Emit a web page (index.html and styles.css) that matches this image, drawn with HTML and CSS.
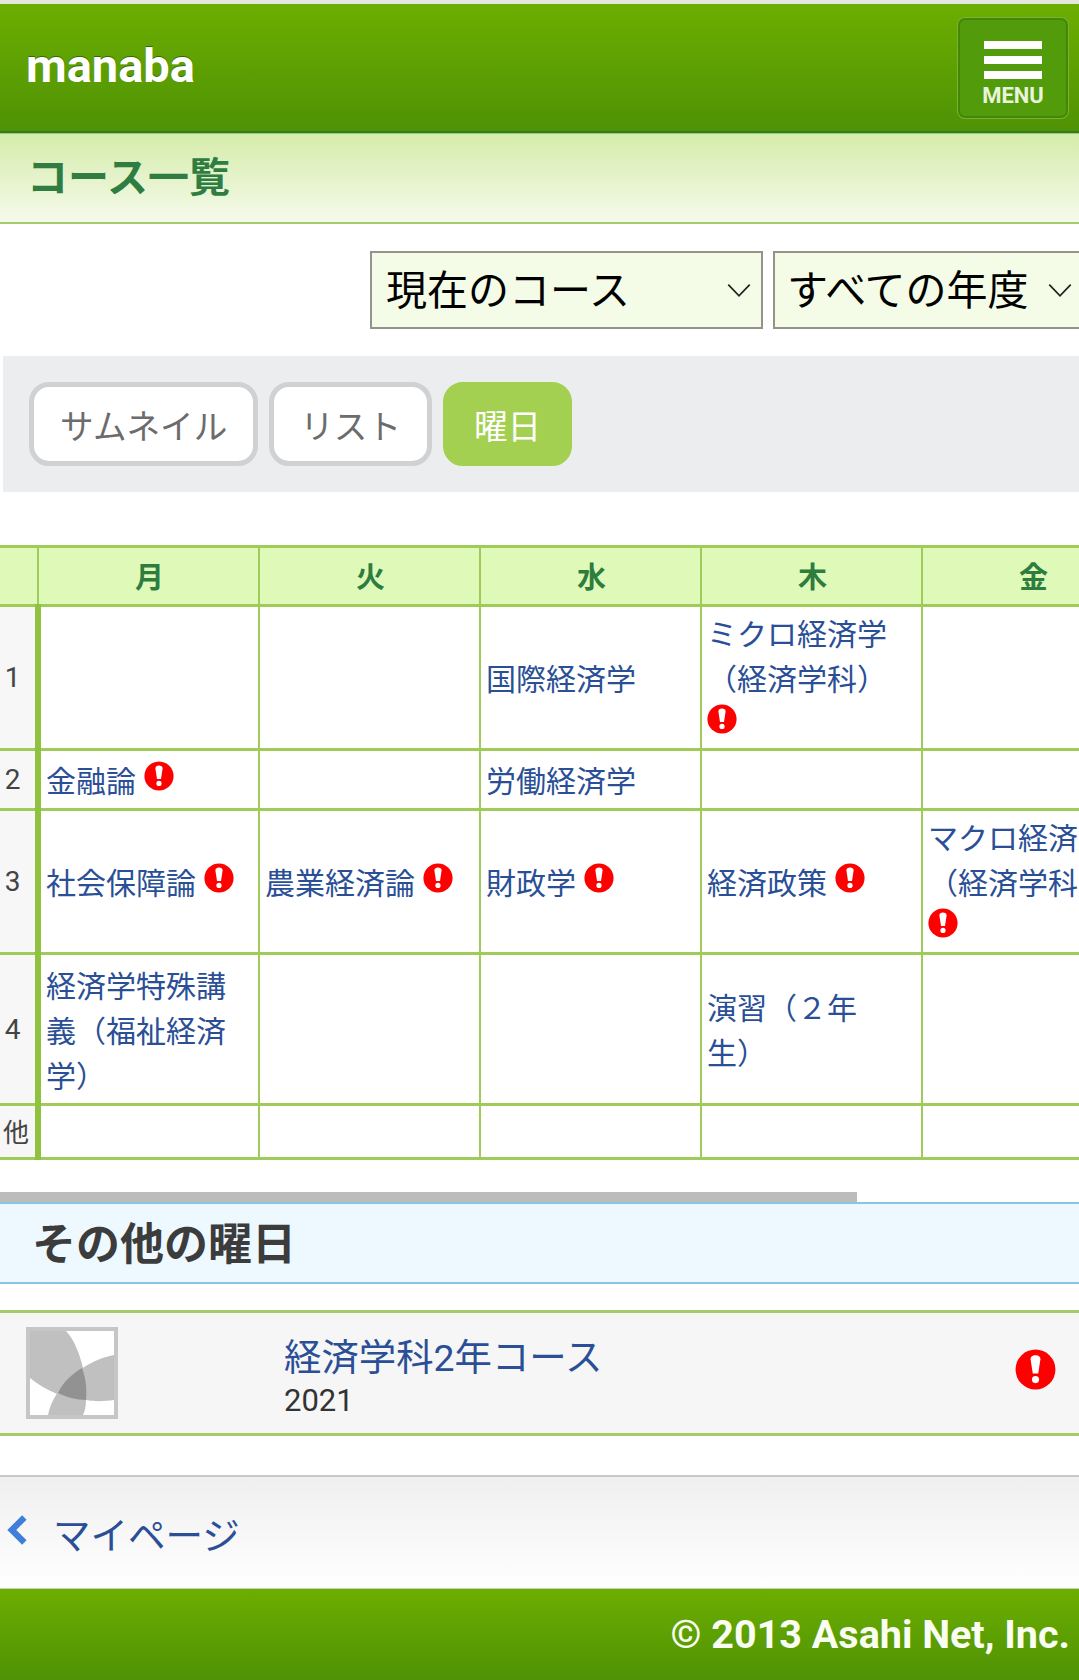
FILE: index.html
```html
<!DOCTYPE html>
<html lang="ja">
<head>
<meta charset="utf-8">
<title>manaba</title>
<link rel="stylesheet" href="styles.css">
</head>
<body>
<svg class="defs" width="0" height="0" aria-hidden="true">
  <symbol id="alert" viewBox="0 0 30 30">
    <circle cx="15" cy="15" r="14.6" fill="#f00"/>
    <path d="M11.4 7.5C11.4 5.4 13 4.6 15 4.6s3.6.8 3.6 2.9L17 18h-4z" fill="#fff"/>
    <circle cx="15" cy="22.4" r="2.6" fill="#fff"/>
  </symbol>
</svg>
<header class="topbar">
  <div class="brand">manaba</div>
  <div class="menu-btn">
    <span class="bar"></span><span class="bar"></span><span class="bar"></span>
    <span class="menu-label">MENU</span>
  </div>
</header>
<h1 class="page-title">コース一覧</h1>
<div class="filters">
  <div class="select select-a"><span>現在のコース</span><svg class="chev" viewBox="0 0 22 14"><path d="M1 1.5 11 12 21 1.5" fill="none" stroke="#222" stroke-width="1.6"/></svg></div>
  <div class="select select-b"><span>すべての年度</span><svg class="chev" viewBox="0 0 22 14"><path d="M1 1.5 11 12 21 1.5" fill="none" stroke="#222" stroke-width="1.6"/></svg></div>
</div>
<nav class="tabs">
  <a class="tab">サムネイル</a>
  <a class="tab">リスト</a>
  <a class="tab tab-on">曜日</a>
</nav>
<div class="table-wrap">
<table class="week">
  <thead>
    <tr class="r-head"><th class="corner"></th><th>月</th><th>火</th><th>水</th><th>木</th><th>金</th><th>土</th></tr>
  </thead>
  <tbody>
    <tr class="r1"><td class="num">1</td><td></td><td></td><td><a>国際経済学</a></td><td><a>ミクロ経済学（経済学科）</a> <svg class="alert"><use href="#alert"/></svg></td><td></td><td></td></tr>
    <tr class="r2"><td class="num">2</td><td><a>金融論</a> <svg class="alert"><use href="#alert"/></svg></td><td></td><td><a>労働経済学</a></td><td></td><td></td><td></td></tr>
    <tr class="r3"><td class="num">3</td><td><a>社会保障論</a> <svg class="alert"><use href="#alert"/></svg></td><td><a>農業経済論</a> <svg class="alert"><use href="#alert"/></svg></td><td><a>財政学</a> <svg class="alert"><use href="#alert"/></svg></td><td><a>経済政策</a> <svg class="alert"><use href="#alert"/></svg></td><td><a>マクロ経済学（経済学科）</a> <svg class="alert"><use href="#alert"/></svg></td><td></td></tr>
    <tr class="r4"><td class="num">4</td><td><a>経済学特殊講義（福祉経済学）</a></td><td></td><td></td><td><a>演習（２年<br>生）</a></td><td></td><td></td></tr>
    <tr class="r5"><td class="num num-other">他</td><td></td><td></td><td></td><td></td><td></td><td></td></tr>
  </tbody>
</table>
</div>
<div class="scroll-thumb"></div>
<h2 class="section-head">その他の曜日</h2>
<div class="course">
  <svg class="thumb" viewBox="0 0 92 92">
    <rect width="92" height="92" fill="#c6c6c6"/>
    <rect x="4" y="4" width="84" height="84" fill="#fff"/>
    <path d="M4 4H40C52 16 62 50 60 73 42 73 20 64 4 51Z" fill="#c0c0c0"/>
    <path d="M88 28C60 33 28 58 22 88H57C59 84 60 78 60 73 70 75 80 74 88 73Z" fill="#c0c0c0"/>
    <path d="M56 41C60 52 61 62 60 73 50 73 40 70 32 66 37 55 46 47 56 41Z" fill="#929292"/>
  </svg>
  <div class="course-text">
    <a class="course-name">経済学科2年コース</a>
    <div class="course-year">2021</div>
  </div>
  <svg class="alert alert-lg"><use href="#alert"/></svg>
</div>
<div class="back">
  <svg class="back-chev" viewBox="0 0 20 28"><path d="M16 3 5 14l11 11" fill="none" stroke="#3f7fd8" stroke-width="5.5"/></svg>
  <a class="back-link">マイページ</a>
</div>
<footer class="foot">© 2013 Asahi Net, Inc.</footer>
</body>
</html>
```

FILE: styles.css
```css
* { box-sizing: border-box; }
html, body { margin: 0; padding: 0; }
body {
  width: 1079px;
  height: 1680px;
  overflow: hidden;
  background: #fff;
  font-family: Roboto, "Noto Sans CJK JP", sans-serif;
  color: #333;
  border-top: 4px solid #e3e7dd;
}
.defs { display: block; height: 0; }
.topbar {
  height: 129px;
  display: flex;
  align-items: flex-start;
  justify-content: space-between;
  background: linear-gradient(#6cae00, #4f9205);
  border-bottom: 2px solid #2f7d20;
  padding: 14px 11px 0 26px;
}
.brand {
  font-size: 47px;
  line-height: 58px;
  margin-top: 19px;
  font-weight: 700;
  color: #fff;
  text-shadow: 0 -1px 0 #2f6b00;
}
.menu-btn {
  width: 110px;
  height: 100px;
  display: flex;
  flex-direction: column;
  align-items: center;
  padding-top: 21px;
  background: #529b0b;
  border: 2px solid #44860a;
  border-radius: 7px;
  box-shadow: 0 0 0 1px #78b52a;
}
.bar { display: block; width: 58px; height: 8px; background: #fff; margin-bottom: 7px; }
.menu-label {
  font-size: 22px;
  line-height: 20px;
  font-weight: 700;
  color: #e9f4dc;
}
.page-title {
  margin: 0;
  height: 91px;
  padding: 0 0 9px 27px;
  display: flex;
  align-items: center;
  font-size: 41px;
  font-weight: 700;
  color: #2f7d42;
  background: linear-gradient(#d5ecaa, #f5faeb);
  border-top: 1px solid #9cc96b;
  border-bottom: 2px solid #a4cc6c;
}
.filters {
  display: flex;
  gap: 10px;
  padding: 27px 0 0 370px;
  height: 132px;
  overflow: hidden;
  width: 1079px;
}
.select {
  flex: none;
  height: 78px;
  display: flex;
  align-items: center;
  justify-content: space-between;
  background: #f4fbe6;
  border: 2px solid #94948a;
  color: #000;
  font-size: 41px;
  padding: 0 10px 6px 14px;
}
.select-a { width: 393px; }
.select-b { width: 330px; justify-content: flex-start; gap: 19px; padding-left: 12px; }
.chev { width: 24px; height: 15px; margin-top: 6px; }
.tabs {
  margin-left: 3px;
  height: 136px;
  background: #ebedef;
  display: flex;
  gap: 11px;
  padding: 26px 0 0 26px;
}
.tab {
  height: 84px;
  display: flex;
  align-items: center;
  padding: 0 26px;
  font-size: 33.6px;
  color: #6c6c6c;
  background: #fff;
  border: 5px solid #cfd1d3;
  border-radius: 20px;
}
.tab-on { background: #a3d050; border-color: #a3d050; color: #fff; }
.table-wrap {
  margin-top: 53px;
  height: 617px;
  overflow: hidden;
}
.week {
  border-collapse: collapse;
  table-layout: fixed;
  width: 1364px;
  font-size: 30px;
  line-height: 45px;
  word-spacing: 1px;
}
.week th, .week td {
  width: 221px;
  border: 2px solid #a0cb58;
  border-top-width: 3px;
  border-bottom-width: 3px;
  padding: 4px 7px 0 5px;
  vertical-align: middle;
}
.week tr > :first-child { border-left: 0; width: 38px; padding: 0; }
.week th {
  background: #dffab8;
  color: #2e7d3f;
  font-weight: 700;
  font-size: 29px;
  padding: 5px 5px 0 7px;
}
.week a { color: #2a4f96; }
.week tr > .num {
  background: #f7f7f7;
  text-align: center;
  font-size: 28px;
  color: #444;
  border-right: 6px solid #8fc33f;
  padding: 0 10px 0 0;
}
.week tr > .num-other { font-size: 26px; padding: 4px 3px 0 0; }
.r-head { height: 59px; }
.r1 { height: 144px; }
.r2 { height: 60px; }
.r3 { height: 144px; }
.r4 { height: 151px; }
.r5 { height: 54px; }
.alert { width: 30px; height: 30px; vertical-align: 1px; }
.scroll-thumb {
  width: 857px;
  height: 10px;
  background: #bcbcbc;
  margin-top: 30px;
}
.section-head {
  margin: 0;
  height: 82px;
  padding: 0 0 4px 32px;
  display: flex;
  align-items: center;
  font-size: 44px;
  font-weight: 700;
  color: #3c3c3c;
  background: #edf9ff;
  border-top: 2px solid #8ac3e3;
  border-bottom: 2px solid #8ac3e3;
}
.course {
  margin-top: 26px;
  height: 126px;
  display: flex;
  align-items: center;
  background: #f6f6f6;
  border-top: 3px solid #a6c96a;
  border-bottom: 3px solid #a6c96a;
  padding-left: 26px;
}
.thumb { width: 92px; height: 92px; flex: none; }
.course-text { margin: 6px 0 0 166px; flex: 1; }
.course-name { display: block; font-size: 37.4px; line-height: 50px; color: #2a4f96; }
.course-year { font-size: 31px; line-height: 36px; color: #333; }
.alert-lg { width: 41px; height: 41px; margin: -8px 23px 0 0; vertical-align: baseline; }
.back {
  margin-top: 39px;
  height: 114px;
  display: flex;
  align-items: center;
  background: linear-gradient(#efefef, #fff);
  border-top: 2px solid #c8c8c8;
  border-bottom: 1px solid #c4d8b4;
  padding-left: 6px;
}
.back-chev { width: 23px; height: 32px; margin-top: -6px; }
.back-link { margin-left: 24px; font-size: 37.5px; color: #2a4f96; }
.foot {
  height: 91px;
  display: flex;
  align-items: center;
  justify-content: flex-end;
  padding: 0 9px 0 0;
  background: linear-gradient(#6cae00, #4f9205);
  color: #fafdf2;
  font-size: 39.5px;
  font-weight: 700;
}
```
